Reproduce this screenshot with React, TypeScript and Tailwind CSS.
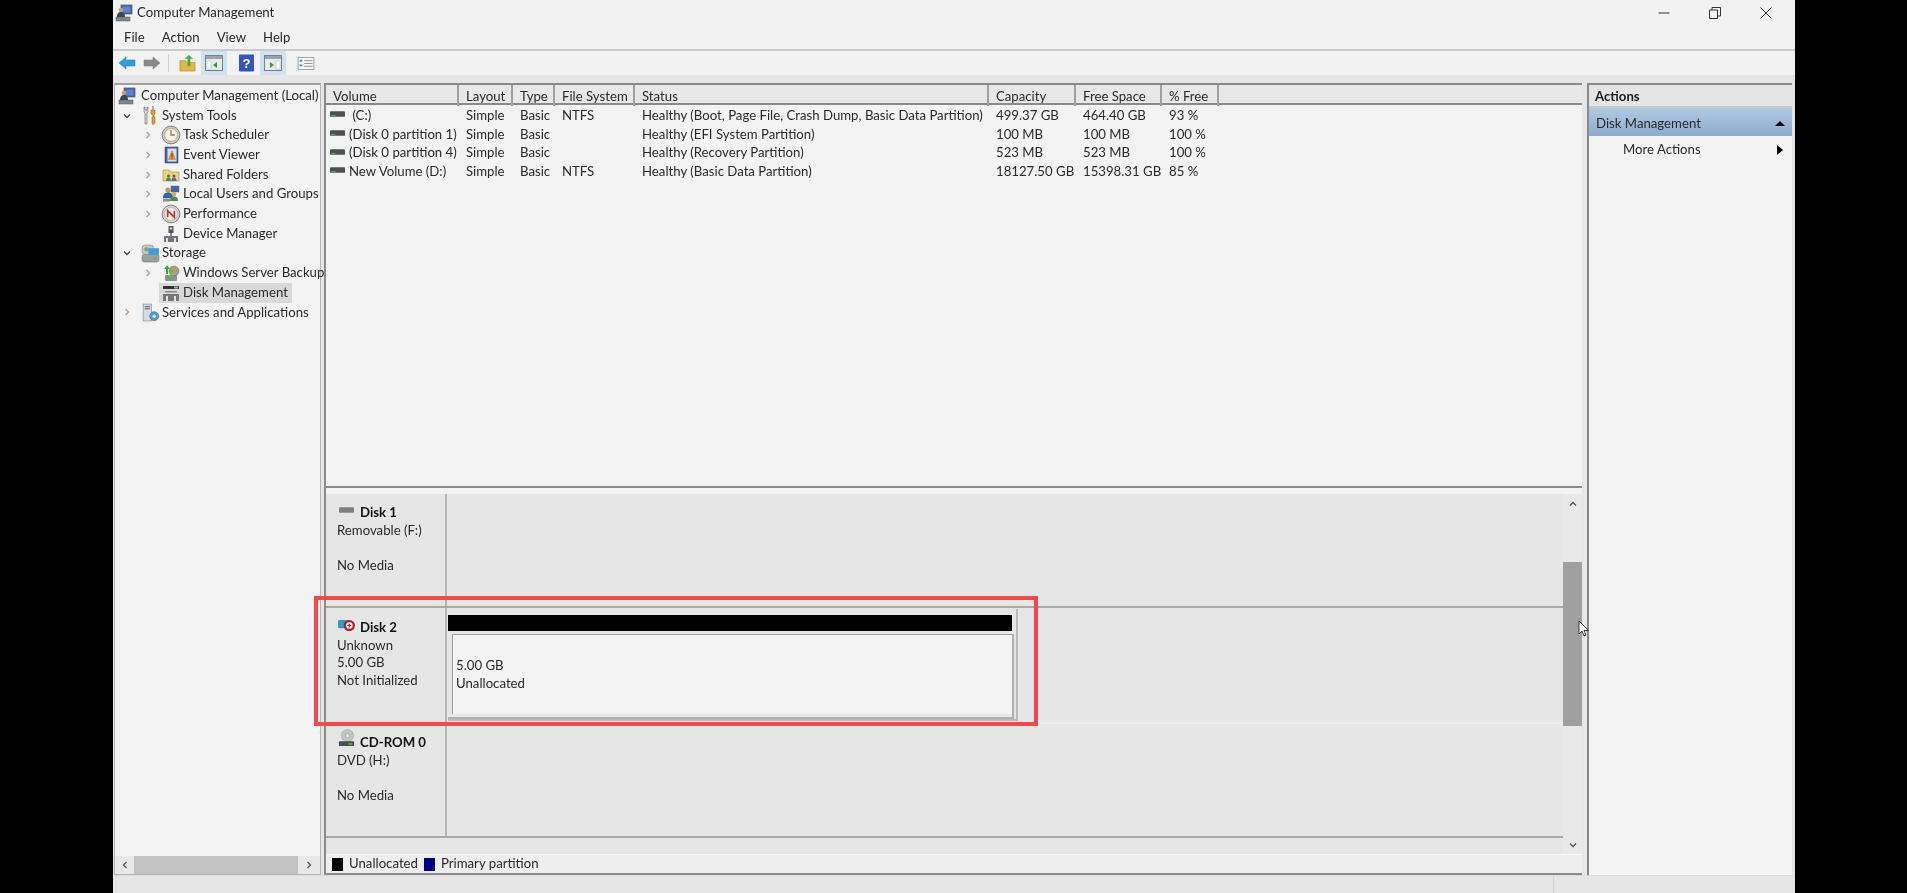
import React from "react";

const Computer = () => (
  <svg viewBox="0 0 18 18" className="w-[18px] h-[18px] shrink-0">
    <rect x="6" y="1" width="11" height="9" fill="#3f5f9f" stroke="#5b6470" strokeWidth="0.8" />
    <rect x="7.500" y="2.500" width="8" height="6" fill="#5b84d6" />
    <rect x="1" y="13" width="14" height="4" fill="#7d8790" stroke="#555" strokeWidth="0.5" />
    <circle cx="6" cy="6" r="2.300" fill="#c9a06a" />
    <path d="M2 13c0-4 2-5 4-5s4 1 4 5z" fill="#3d4658" />
  </svg>
);
const Tools = () => (
  <svg viewBox="0 0 14 20" className="w-[14px] h-[20px] shrink-0">
    <path d="M1 1v5l1 1v11h2V7l1-1V1L4 1v3H2V1z" fill="#d6d8da" stroke="#666" strokeWidth="0.6" />
    <path d="M8 4h4v4l-1 1v2h1v6l-1.500 1.500h-1L9 17v-6h1V9L8 8z" fill="#e8a020" stroke="#8a5a10" strokeWidth="0.5" />
    <rect x="9.300" y="0.500" width="1.400" height="4" fill="#b8bcc0" stroke="#777" strokeWidth="0.3" />
  </svg>
);
const Clock = () => (
  <svg viewBox="0 0 18 18" className="w-[20px] h-[20px] shrink-0">
    <circle cx="9" cy="9" r="8" fill="#cfc9b8" stroke="#777" strokeWidth="0.8" />
    <circle cx="9" cy="9" r="5.800" fill="#f2f0e8" stroke="#999" strokeWidth="0.6" />
    <path d="M9 4.500V9H12.500" fill="none" stroke="#a08030" strokeWidth="1.200" />
  </svg>
);
const EventLog = () => (
  <svg viewBox="0 0 18 18" className="w-[18px] h-[18px] shrink-0">
    <rect x="3" y="1" width="13" height="16" fill="#4a64a8" stroke="#334" strokeWidth="0.5" />
    <rect x="5.500" y="2.500" width="9" height="13" fill="#d8dff0" />
    <path d="M10 4.500l3.500 9h-7z" fill="#e0a030" stroke="#a06010" strokeWidth="0.4" />
    <rect x="9.400" y="7.500" width="1.200" height="3.500" fill="#b02020" />
    <rect x="9.400" y="11.600" width="1.200" height="1.200" fill="#b02020" />
  </svg>
);
const Shared = () => (
  <svg viewBox="0 0 18 18" className="w-[18px] h-[18px] shrink-0">
    <path d="M1 4h6l1.500 2H17v9H1z" fill="#ecd283" stroke="#a48b3f" strokeWidth="0.6" />
    <circle cx="6.500" cy="10" r="1.500" fill="#4d7a40" />
    <path d="M4 15c0-2.500 1-3.500 2.500-3.500S9 12.500 9 15z" fill="#4d8a4c" />
    <circle cx="12" cy="10" r="1.500" fill="#7a5a30" />
    <path d="M9.500 15c0-2.500 1-3.500 2.500-3.500s2.500 1 2.500 3.500z" fill="#4c6ea8" />
  </svg>
);
const Users = () => (
  <svg viewBox="0 0 18 18" className="w-[18px] h-[18px] shrink-0">
    <rect x="9" y="1" width="8" height="6" fill="#3e63b0" stroke="#666" strokeWidth="0.5" />
    <circle cx="6" cy="5" r="2.600" fill="#c99a5b" />
    <path d="M1 13c0-4 2-5.500 5-5.500s5 1.500 5 5.500z" fill="#3a62a8" />
    <circle cx="12" cy="9" r="2.300" fill="#d6a96a" />
    <path d="M8 16c0-3.500 1.500-4.500 4-4.500s4 1 4 4.500z" fill="#4d8a4c" />
    <rect x="1" y="13.500" width="7" height="3" fill="#8a8f96" />
  </svg>
);
const Perf = () => (
  <svg viewBox="0 0 18 18" className="w-[20px] h-[20px] shrink-0">
    <circle cx="9" cy="9" r="8" fill="#d5d2cc" stroke="#777" strokeWidth="0.8" />
    <circle cx="9" cy="9" r="5.800" fill="#f6f3ee" stroke="#999" strokeWidth="0.5" />
    <path d="M6 12V6l6 6V6" fill="none" stroke="#c8282a" strokeWidth="1.500" />
  </svg>
);
const Device = () => (
  <svg viewBox="0 0 18 18" className="w-[18px] h-[18px] shrink-0">
    <rect x="6.500" y="1" width="5" height="7" fill="#555" />
    <rect x="7.800" y="2.500" width="2.400" height="2" fill="#ddd" />
    <rect x="8.300" y="8" width="1.400" height="3" fill="#555" />
    <rect x="2" y="11" width="14" height="6" fill="#6f757c" />
    <rect x="4" y="13" width="2" height="4" fill="#e4e4e4" />
    <rect x="12" y="13" width="2" height="4" fill="#e4e4e4" />
  </svg>
);
const Storage = () => (
  <svg viewBox="0 0 18 18" className="w-[19px] h-[19px] shrink-0">
    <rect x="1" y="10" width="16" height="7" rx="2" fill="#9aa0a5" stroke="#666" strokeWidth="0.5" />
    <circle cx="13" cy="14" r="1.200" fill="#67b04a" />
    <rect x="1" y="1" width="11" height="9" rx="3" fill="#c3c8cc" stroke="#777" strokeWidth="0.5" />
    <rect x="7" y="4" width="10" height="6" fill="#3d9ad8" />
    <circle cx="5" cy="5" r="2" fill="#74a86a" />
  </svg>
);
const Backup = () => (
  <svg viewBox="0 0 18 18" className="w-[18px] h-[18px] shrink-0">
    <rect x="3" y="11" width="12" height="6" rx="1" fill="#8c8f92" />
    <circle cx="12" cy="7" r="5" fill="#b59a7a" stroke="#666" strokeWidth="0.5" />
    <path d="M5 1l3 4H6v5H4V5H2z" fill="#3ea83e" />
    <path d="M9 15l-3-4h2V4h2v7h2z" fill="#5cc24c" />
  </svg>
);
const DiskMgmt = () => (
  <svg viewBox="0 0 18 18" className="w-[18px] h-[18px] shrink-0">
    <rect x="1" y="2" width="16" height="3" fill="#333" />
    <rect x="12" y="2.500" width="4" height="2" fill="#aaa" />
    <rect x="3" y="7" width="12" height="1.500" fill="#8a8a8a" />
    <rect x="1" y="10" width="16" height="7" fill="#777" />
    <rect x="4" y="12" width="2" height="5" fill="#e4e4e4" />
    <rect x="12" y="12" width="2" height="5" fill="#e4e4e4" />
  </svg>
);
const Services = () => (
  <svg viewBox="0 0 18 18" className="w-[19px] h-[19px] shrink-0">
    <rect x="2" y="1" width="8" height="16" fill="#d4dbe2" stroke="#7d8890" strokeWidth="0.6" />
    <rect x="3.500" y="3" width="5" height="1" fill="#667" />
    <rect x="3.500" y="5" width="5" height="1" fill="#667" />
    <circle cx="12.500" cy="12.500" r="4.200" fill="#5b9bc9" stroke="#3b6e92" strokeWidth="0.6" />
    <circle cx="12.500" cy="12.500" r="1.600" fill="#d8e8f4" />
  </svg>
);

const VolumeIcon = () => (
  <svg viewBox="0 0 16 6" className="w-[15px] h-[6px] shrink-0 -mt-[3px]">
    <rect width="16" height="6" rx="1" fill="#4b5052" />
    <rect x="1" y="4" width="5" height="1.500" fill="#5aa050" />
  </svg>
);

type TreeItem = {
  level: 0 | 1 | 2;
  chevron?: "open" | "closed";
  icon: React.ReactNode;
  label: string;
  selected?: boolean;
};

const tree: TreeItem[] = [
  { level: 0, icon: <Computer />, label: "Computer Management (Local)" },
  { level: 1, chevron: "open", icon: <Tools />, label: "System Tools" },
  { level: 2, chevron: "closed", icon: <Clock />, label: "Task Scheduler" },
  { level: 2, chevron: "closed", icon: <EventLog />, label: "Event Viewer" },
  { level: 2, chevron: "closed", icon: <Shared />, label: "Shared Folders" },
  { level: 2, chevron: "closed", icon: <Users />, label: "Local Users and Groups" },
  { level: 2, chevron: "closed", icon: <Perf />, label: "Performance" },
  { level: 2, icon: <Device />, label: "Device Manager" },
  { level: 1, chevron: "open", icon: <Storage />, label: "Storage" },
  { level: 2, chevron: "closed", icon: <Backup />, label: "Windows Server Backup" },
  { level: 2, icon: <DiskMgmt />, label: "Disk Management", selected: true },
  { level: 1, chevron: "closed", icon: <Services />, label: "Services and Applications" },
];

const Chevron = ({ kind }: { kind?: "open" | "closed" }) => (
  <span className="w-[19px] shrink-0 flex items-center">
    {kind === "open" && (
      <svg viewBox="0 0 10 10" className="w-[10px] h-[10px]">
        <path d="M2 3.500L5 6.500L8 3.500" fill="none" stroke="#444" strokeWidth="1.300" />
      </svg>
    )}
    {kind === "closed" && (
      <svg viewBox="0 0 10 10" className="w-[10px] h-[10px]">
        <path d="M3.500 2L6.500 5L3.500 8" fill="none" stroke="#a2a2a2" strokeWidth="1.300" />
      </svg>
    )}
  </span>
);

const TreeRow = ({ item }: { item: TreeItem }) => {
  const indent = item.level === 0 ? "pl-[3px]" : item.level === 1 ? "pl-[7px]" : "pl-[28px]";
  return (
    <div className={`flex items-center h-[19.7px] whitespace-nowrap ${indent}`}>
      {item.level > 0 && <Chevron kind={item.chevron} />}
      <div
        className={`flex items-center h-full -ml-[3px] pl-[3px] pr-[4px] ${
          item.selected ? "bg-[#d9d9d9]" : ""
        } ${item.level === 0 ? "gap-[5px]" : "gap-[3px]"}`}
      >
        <span className="w-[18px] flex justify-center shrink-0">{item.icon}</span>
        <span>{item.label}</span>
      </div>
    </div>
  );
};

const columnWidths = "grid-cols-[133px_54px_42px_80px_354px_87px_86px_57px_1fr]";
const headers = ["Volume", "Layout", "Type", "File System", "Status", "Capacity", "Free Space", "% Free", ""];
const rows = [
  ["\u00A0(C:)", "Simple", "Basic", "NTFS", "Healthy (Boot, Page File, Crash Dump, Basic Data Partition)", "499.37 GB", "464.40 GB", "93 %"],
  ["(Disk 0 partition 1)", "Simple", "Basic", "", "Healthy (EFI System Partition)", "100 MB", "100 MB", "100 %"],
  ["(Disk 0 partition 4)", "Simple", "Basic", "", "Healthy (Recovery Partition)", "523 MB", "523 MB", "100 %"],
  ["New Volume (D:)", "Simple", "Basic", "NTFS", "Healthy (Basic Data Partition)", "18127.50 GB", "15398.31 GB", "85 %"],
];

const DiskLabel = ({
  icon,
  title,
  lines,
  pad,
}: {
  icon: React.ReactNode;
  title: string;
  lines: string[];
  pad: string;
}) => (
  <div className={`w-[121px] shrink-0 border-r-2 border-[#b4b4b4] pl-[11px] leading-[17.500px] ${pad}`}>
    <div className="flex items-center h-[17.500px] font-bold text-[#111] gap-[4px]">
      <span className="w-[19px] flex justify-center shrink-0">{icon}</span>
      {title}
    </div>
    {lines.map((l, i) => (
      <div key={i} className="h-[17.500px] whitespace-nowrap">
        {l}
      </div>
    ))}
  </div>
);

const Disk1Icon = () => (
  <svg viewBox="0 0 16 6" className="w-[15px] h-[6px] -mt-[6px]">
    <rect width="16" height="6" rx="1" fill="#808080" />
  </svg>
);
const Disk2Icon = () => (
  <svg viewBox="0 0 20 16" className="w-[19px] h-[15px] -mt-[5px]">
    <rect x="1" y="2" width="13" height="9" rx="1.500" fill="#2e9dcb" />
    <circle cx="13" cy="8" r="6" fill="#b3202a" />
    <circle cx="13" cy="8" r="3.500" fill="#f4f4f4" />
    <path d="M11 8h4M13 6v4" stroke="#b3202a" strokeWidth="1.200" />
  </svg>
);
const CdIcon = () => (
  <svg viewBox="0 0 20 20" className="w-[19px] h-[19px] -mt-[8px]">
    <circle cx="11" cy="7" r="6.500" fill="#c3c3c3" stroke="#999" strokeWidth="0.5" />
    <circle cx="11" cy="7" r="2" fill="#eee" stroke="#888" strokeWidth="0.5" />
    <rect x="2" y="13" width="16" height="5" rx="1" fill="#4a4f50" />
    <rect x="12" y="15" width="4" height="1.500" fill="#6ab04c" />
  </svg>
);

const PanelIcon = ({ side }: { side: "left" | "right" }) => (
  <svg viewBox="0 0 18 16" className="w-[18px] h-[16px]">
    <rect x="0.500" y="0.500" width="17" height="15" fill="#e8ebee" stroke="#7b8088" />
    <rect x="1" y="1" width="16" height="3" fill="#9aa2aa" />
    {side === "left" ? (
      <>
        <rect x="2" y="6" width="4" height="8" fill="#fff" stroke="#aaa" strokeWidth="0.5" />
        <path d="M12 7v6l-4-3z" fill="#2f9a3c" />
      </>
    ) : (
      <>
        <rect x="12" y="6" width="4" height="8" fill="#fff" stroke="#aaa" strokeWidth="0.5" />
        <path d="M6 7v6l4-3z" fill="#2f9a3c" />
      </>
    )}
  </svg>
);

export default function App() {
  return (
    <div className="w-[1907px] h-[893px] bg-black pl-[113px] pr-[112px] overflow-hidden text-[13.200px] text-[#2a2a2a] [font-family:Lato,sans-serif]">
      <div className="h-full bg-[#f2f2f2] flex flex-col blur-[0.4px]">
        {/* title bar */}
        <div className="h-[25px] flex items-center justify-between pt-[1px]">
          <div className="flex items-center gap-[4px] pl-[2px]">
            <Computer />
            <span>Computer Management</span>
          </div>
          <div className="flex items-center pr-[4px]">
            <div className="w-[51px] h-[25px] flex items-center justify-center">
              <svg viewBox="0 0 12 12" className="w-[12px] h-[12px]">
                <path d="M0.500 6H11.500" stroke="#333" />
              </svg>
            </div>
            <div className="w-[51px] h-[25px] flex items-center justify-center">
              <svg viewBox="0 0 12 12" className="w-[12px] h-[12px]">
                <path d="M0.500 3H8.500V11.500H0.500zM3 3V0.500H11.500V9H8.500" fill="none" stroke="#333" />
              </svg>
            </div>
            <div className="w-[51px] h-[25px] flex items-center justify-center">
              <svg viewBox="0 0 12 12" className="w-[12px] h-[12px]">
                <path d="M0.500 0.500L11.500 11.500M11.500 0.500L0.500 11.500" stroke="#333" />
              </svg>
            </div>
          </div>
        </div>
        {/* menu */}
        <div className="h-[26px] flex items-center gap-[17px] pl-[11px] pt-[2px] border-b-2 border-[#cbcbcb]">
          <span>File</span>
          <span>Action</span>
          <span>View</span>
          <span>Help</span>
        </div>
        {/* toolbar */}
        <div className="h-[24px] flex items-center pl-[5px]">
          <svg viewBox="0 0 18 14" className="w-[18px] h-[14px]">
            <path d="M8 1v3h9v6H8v3L1 7z" fill="#2f9fe4" stroke="#1c78b8" strokeWidth="0.5" />
          </svg>
          <svg viewBox="0 0 18 14" className="w-[18px] h-[14px] ml-[7px]">
            <path d="M10 1v3H1v6h9v3l7-6z" fill="#8a8a8a" stroke="#777" strokeWidth="0.5" />
          </svg>
          <div className="w-px h-[18px] bg-[#cfcfcf] ml-[7px]" />
          <svg viewBox="0 0 18 18" className="w-[17px] h-[17px] ml-[10px]">
            <path d="M1 6h6l1 2h9v9H1z" fill="#e0b84c" stroke="#a68428" strokeWidth="0.6" />
            <path d="M9 12V4H6l4.500-4L15 4h-3v8z" fill="#4fa84a" />
          </svg>
          <div className="w-[26px] h-full bg-[#cfe3f5] flex items-center justify-center ml-[5px]">
            <PanelIcon side="left" />
          </div>
          <svg viewBox="0 0 16 18" className="w-[15px] h-[18px] ml-[12px]">
            <rect width="16" height="18" rx="1" fill="#3557b7" />
            <text x="8" y="14" fontSize="14" fontWeight="700" textAnchor="middle" fill="#fff" fontFamily="Liberation Sans">?</text>
          </svg>
          <div className="w-[26px] h-full bg-[#cfe3f5] flex items-center justify-center ml-[6px]">
            <PanelIcon side="right" />
          </div>
          <svg viewBox="0 0 18 14" className="w-[18px] h-[13px] ml-[11px]">
            <rect x="0.500" y="0.500" width="17" height="13" fill="#f6f6f6" stroke="#9aa0a6" />
            <rect x="2" y="3" width="3" height="2" fill="#3d8fd0" />
            <rect x="2" y="8" width="3" height="2" fill="#3d8fd0" />
            <path d="M7 4h9M7 7h9M7 10h9" stroke="#8a9096" />
          </svg>
        </div>
        {/* main area */}
        <div className="flex-1 min-h-0 bg-[#e6e6e6] pt-[8px] pl-[1px] flex">
          {/* tree */}
          <div className="w-[207px] shrink-0 bg-[#f3f3f3] border-x border-b border-[#b4b4b4] border-t-2 border-t-[#a0a0a0] flex flex-col">
            <div className="flex-1 pt-[1px]">
              {tree.map((t) => (
                <TreeRow key={t.label} item={t} />
              ))}
            </div>
            <div className="h-[18px] bg-[#e8e8e8] flex items-center">
              <span className="w-[19px] flex justify-center">
                <svg viewBox="0 0 10 10" className="w-[10px] h-[10px]">
                  <path d="M6.500 2L3.500 5L6.500 8" fill="none" stroke="#555" strokeWidth="1.300" />
                </svg>
              </span>
              <div className="w-[164px] h-full bg-[#c3c3c3]" />
              <span className="w-[22px] flex justify-center">
                <svg viewBox="0 0 10 10" className="w-[10px] h-[10px]">
                  <path d="M3.500 2L6.500 5L3.500 8" fill="none" stroke="#555" strokeWidth="1.300" />
                </svg>
              </span>
            </div>
          </div>
          {/* center */}
          <div className="w-[1258px] shrink-0 ml-[3px] border-l-2 border-t-2 border-b-2 border-[#8a8a8a] flex flex-col bg-[#f3f3f3]">
            <div className="h-[403px] shrink-0 border-b-2 border-[#8a8a8a] flex flex-col">
              <div className={`grid ${columnWidths} h-[20px] shrink-0 bg-[#e8e8e8] border-b-2 border-[#8a8a8a]`}>
                {headers.map((h, i) => (
                  <div key={i} className="pl-[7px] pt-[1px] leading-[20px] border-r-2 border-[#a0a0a0] last:border-r-0 whitespace-nowrap">
                    {h}
                  </div>
                ))}
              </div>
              <div className="pt-[1px]">
                {rows.map((r) => (
                  <div key={r[0]} className={`grid ${columnWidths} h-[18.700px] items-center`}>
                    {r.map((c, j) =>
                      j === 0 ? (
                        <div key={j} className="flex items-center gap-[4px] pl-[4px] whitespace-nowrap">
                          <VolumeIcon />
                          <span>{c}</span>
                        </div>
                      ) : (
                        <div key={j} className="pl-[7px] whitespace-nowrap">
                          {c}
                        </div>
                      )
                    )}
                  </div>
                ))}
              </div>
            </div>
            <div className="h-[6px] shrink-0 bg-[#f3f3f3]" />
            {/* disk area */}
            <div className="flex flex-1 min-h-0 bg-[#e6e6e6]">
              <div className="w-[1237px] shrink-0 relative">
                <div className="h-[114px] flex border-b-2 border-[#a8a8a8]">
                  <DiskLabel pad="pt-[10px]" icon={<Disk1Icon />} title="Disk 1" lines={["Removable (F:)", "\u00A0", "No Media"]} />
                </div>
                <div className="h-[116px] flex border-b-2 border-[#ededed] relative">
                  <DiskLabel pad="pt-[11px]" icon={<Disk2Icon />} title="Disk 2" lines={["Unknown", "5.00 GB", "Not Initialized"]} />
                  <div className="pt-[1px] pl-px">
                    <div className="w-[570px] h-[112px] border-r-2 border-b-2 border-[#b9b9b9] pt-[6px]">
                      <div className="w-[564px] h-[16px] bg-black" />
                      <div className="w-[566px] h-[85px] mt-[3px] border-r-2 border-b-2 border-[#b0b0b0] pl-[4px] pb-[3px]">
                        <div className="h-full bg-[#f3f3f3] border-t border-l border-[#a0a0a0] pl-[3px] flex flex-col justify-center leading-[17.500px]">
                          <span>5.00 GB</span>
                          <span>Unallocated</span>
                        </div>
                      </div>
                    </div>
                  </div>
                  <div className="absolute -left-[12px] -top-[12px] w-[724px] h-[130px] border-4 border-[#f24a4a] pointer-events-none" />
                </div>
                <div className="h-[114px] flex border-b-2 border-[#a8a8a8]">
                  <DiskLabel pad="pt-[10px]" icon={<CdIcon />} title="CD-ROM 0" lines={["DVD (H:)", "\u00A0", "No Media"]} />
                </div>
                <div className="h-[14px]" />
              </div>
              <div className="w-[19px] shrink-0 bg-[#e9e9e9] flex flex-col items-center relative">
                <div className="h-[19px] flex items-center">
                  <svg viewBox="0 0 10 10" className="w-[10px] h-[10px]">
                    <path d="M2 6.500L5 3.500L8 6.500" fill="none" stroke="#555" strokeWidth="1.300" />
                  </svg>
                </div>
                <div className="w-full h-[49px]" />
                <div className="w-full h-[164px] bg-[#a0a0a0]" />
                <div className="flex-1" />
                <div className="h-[19px] flex items-center">
                  <svg viewBox="0 0 10 10" className="w-[10px] h-[10px]">
                    <path d="M2 3.500L5 6.500L8 3.500" fill="none" stroke="#555" strokeWidth="1.300" />
                  </svg>
                </div>
                <svg viewBox="0 0 12 18" className="absolute left-[15px] top-[126px] w-[12px] h-[18px]">
                  <path d="M1 1V14L4 11L6 16L8 15L6 10.500H10.500z" fill="#fff" stroke="#222" strokeWidth="0.900" />
                </svg>
              </div>
            </div>
            <div className="h-[19px] shrink-0 bg-[#eeeeee] border-t border-[#f8f8f8] flex items-center pl-[6px] whitespace-nowrap">
              <span className="w-[11px] h-[13px] bg-black mr-[6px]" />
              <span>Unallocated</span>
              <span className="w-[11px] h-[13px] bg-[#000080] ml-[6px] mr-[6px]" />
              <span>Primary partition</span>
            </div>
          </div>
          {/* actions */}
          <div className="w-[205px] shrink-0 ml-[5px] bg-[#f3f3f3] border-l-2 border-t-2 border-[#8a8a8a] flex flex-col">
            <div className="h-[23px] bg-[#e5e5e5] border-b-2 border-[#c8c8c8] pl-[6px] leading-[23px] font-bold text-[#1c1c1c]">
              Actions
            </div>
            <div className="h-[28px] bg-linear-to-b from-[#b0cae3] to-[#8dabcd] flex items-center justify-between pl-[7px] pr-[7px] pt-[3px]">
              <span>Disk Management</span>
              <span className="w-0 h-0 border-x-[5px] border-x-transparent border-b-[5px] border-b-black" />
            </div>
            <div className="h-[28px] flex items-center justify-between pl-[34px] pr-[9px]">
              <span>More Actions</span>
              <span className="w-0 h-0 border-y-[5px] border-y-transparent border-l-[6px] border-l-black" />
            </div>
          </div>
        </div>
        {/* status bar */}
        <div className="h-[18px] shrink-0 bg-[#e6e6e6] border-t border-[#dcdcdc] flex justify-end">
          <div className="w-[242px] border-l border-[#d6d6d6]" />
        </div>
      </div>
    </div>
  );
}
